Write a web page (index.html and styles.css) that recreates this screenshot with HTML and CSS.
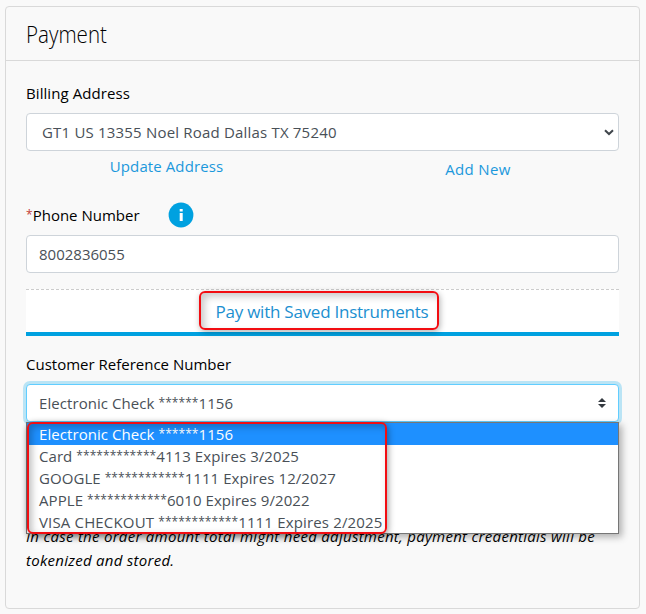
FILE: index.html
```html
<!DOCTYPE html>
<html lang="en">
<head>
<meta charset="utf-8">
<title>Payment</title>
<link rel="stylesheet" href="styles.css">
</head>
<body>
<section class="card">
  <header class="card-header"><h1 class="title">Payment</h1></header>
  <div class="card-body">
    <div class="label">Billing Address</div>
    <div class="control address">
      <span>GT1 US 13355 Noel Road Dallas TX 75240</span>
      <svg class="chevron" width="10" height="7" viewBox="0 0 10 7"><path d="M1 1.200 5 5l4-3.800" fill="none" stroke="#40464c" stroke-width="2"/></svg>
    </div>
    <div class="links">
      <a class="link update">Update Address</a>
      <a class="link add">Add New</a>
    </div>
    <div class="label phone-label">
      <span><span class="required mask">*</span>Phone Number</span>
      <svg class="info" width="26" height="26" viewBox="0 0 26 26"><circle cx="13" cy="13" r="12.400" fill="#00a1e0"/><path d="M11.700 7h3v2.400h-3zM11.700 11h3v8h-3z" fill="#fff"/></svg>
    </div>
    <div class="control phone"><span>8002836055</span></div>
    <div class="tab"><a class="tab-link">Pay with Saved Instruments</a></div>
    <div class="label ref-label">Customer Reference Number</div>
    <div class="picker">
      <div class="control focused">
        <span>Electronic Check <span class="mask">******</span>1156</span>
        <svg class="sort" width="8" height="10" viewBox="0 0 8 10"><path d="M4 0 8 4H0zM0 6h8L4 10z" fill="#343a40"/></svg>
      </div>
      <div class="menu">
        <div class="option selected">Electronic Check <span class="mask">******</span>1156</div>
        <div class="option">Card <span class="mask">************</span>4113 Expires 3/2025</div>
        <div class="option">GOOGLE <span class="mask">************</span>1111 Expires 12/2027</div>
        <div class="option">APPLE <span class="mask">************</span>6010 Expires 9/2022</div>
        <div class="option visa">VISA CHECKOUT <span class="mask">************</span>1111 Expires 2/2025</div>
        <div class="highlight"></div>
      </div>
    </div>
    <p class="note">In case the order amount total might need adjustment, payment credentials will be<br>tokenized and stored.</p>
  </div>
</section>
</body>
</html>
```
FILE: styles.css
```css
* { box-sizing: border-box; }
body {
  margin: 0;
  padding: 6px 6px 5px 5px;
  background: #f9f9f9;
  color: #000;
  font: 15px/24px "Open Sans", "Noto Sans", sans-serif;
}
.card {
  height: 603px;
  border: 1px solid #d9d9d9;
  border-radius: 4px;
  white-space: nowrap;
}
.card-header {
  height: 54px;
  padding: 10px 20px;
  border-bottom: 1px solid #d9d9d9;
}
.title {
  margin: 0;
  font-size: 23px;
  font-weight: 300;
  line-height: 34px;
  transform: scaleX(.895);
  transform-origin: left;
}
.card-body { padding: 20px; }
.label { height: 32px; letter-spacing: .08px; }
.control {
  display: flex;
  align-items: center;
  justify-content: space-between;
  height: 38px;
  padding: 0 12px;
  border: 1px solid #ced4da;
  border-radius: 4px;
  background: #fff;
  color: #495057;
  letter-spacing: .07px;
}
.address { padding: 0 4px 0 15px; letter-spacing: .19px; }
.phone { letter-spacing: 0; }
.mask {
  font-size: 12px;
  line-height: 1;
  letter-spacing: .05px;
  vertical-align: 2px;
}
.links {
  display: grid;
  grid-template-columns: 281px 1fr;
  height: 52px;
}
.link { text-align: center; color: #1b98dc; }
.update { padding-top: 3px; letter-spacing: .1px; }
.add { padding-top: 6px; margin-right: -30px; letter-spacing: .35px; }
.phone-label { display: flex; gap: 28px; letter-spacing: 0; }
.info { margin-top: -1px; }
.required { color: #c23934; }
.tab {
  display: flex;
  justify-content: center;
  height: 47px;
  margin-top: 16px;
  border-top: 1px dashed #ccc;
  border-bottom: 4px solid #00a1e0;
  background: #fff;
}
.tab-link {
  width: 240px;
  height: 39px;
  margin: 1px 0 0 -8px;
  padding: 7px 0 0 15px;
  border: 2px solid #f20d12;
  border-radius: 6px;
  box-shadow: 1px 2px 6px rgba(0,0,0,.3), inset 4px 4px 7px rgba(0,0,0,.2);
  color: #1b8fd0;
  font-size: 17px;
  letter-spacing: -.24px;
}
.ref-label { margin-top: 16px; letter-spacing: 0; }
.picker { position: relative; }
.focused {
  border-color: #61cdff;
  box-shadow: 0 0 0 3px #bae4f5;
}
.menu {
  position: absolute;
  top: 38px;
  left: 0;
  width: 593px;
  height: 112px;
  border: 1px solid #767676;
  background: #fff;
  box-shadow: 3px 3px 7px rgba(0,0,0,.3);
  color: #495057;
  letter-spacing: .07px;
}
.option { height: 22px; padding-left: 12px; line-height: 22px; }
.selected { background: #1e90ff; color: #fff; }
.visa { letter-spacing: .16px; }
.highlight {
  position: absolute;
  top: -1px;
  left: 0;
  width: 360px;
  height: 112px;
  border: 2px solid #f20d12;
  border-radius: 6px;
  box-shadow: 1px 2px 7px rgba(0,0,0,.4), inset 3px 3px 7px rgba(0,0,0,.25);
}
.note { margin: 102px 0 0; font-style: italic; letter-spacing: .27px; }
```
